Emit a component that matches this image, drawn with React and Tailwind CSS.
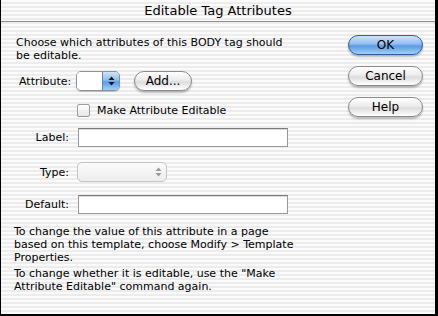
import React from 'react';

const stripes = "bg-[repeating-linear-gradient(to_bottom,#fbfbfb_0px,#fbfbfb_2px,#ececec_2px,#ececec_4px)]";

const AquaButton = ({ children, primary, className = '' }) => (
  <button
    className={
      'h-[20px] rounded-full border text-[12px] leading-none shadow-[0_2px_2px_rgba(0,0,0,0.25)] ' +
      (primary
        ? 'border-[#2d5f9e] text-black bg-[linear-gradient(to_bottom,#cfe4fb_0%,#8fbdf0_45%,#5a9ae4_55%,#9cd0fb_100%)] '
        : 'border-[#8a8a8a] text-black bg-[linear-gradient(to_bottom,#ffffff_0%,#ececec_45%,#dcdcdc_55%,#ffffff_100%)] ') +
      className
    }
  >
    {children}
  </button>
);

const Arrows = ({ color }) => (
  <svg width="7" height="10" viewBox="0 0 7 10">
    <path d="M3.5 0.5 L6.5 4 L0.5 4 Z" fill={color} />
    <path d="M3.5 9.5 L6.5 6 L0.5 6 Z" fill={color} />
  </svg>
);

const Field = ({ className = '' }) => (
  <div className={'h-[19px] w-[210px] border border-[#9a9a9a] border-t-[#7a7a7a] bg-white shadow-[inset_0_1px_1px_rgba(0,0,0,0.15)] ' + className} />
);

export default function App() {
  return (
    <div className={`w-[438px] h-[316px] border-l border-r-[3px] border-b-2 border-black ${stripes} flex flex-col font-['DejaVu_Sans',sans-serif] text-[11px] text-black`}>
      <div className="h-[22px] shrink-0 border-b border-[#8c8c8c] flex items-center justify-center text-[13px]">
        Editable Tag Attributes
      </div>
      <div className="flex flex-1">
        <div className="flex-1 pl-[15px] pt-[14px] leading-[13px]">
          <p>Choose which attributes of this BODY tag should<br />be editable.</p>

          <div className="mt-[9px] flex items-center h-[20px]">
            <span className="pl-[3px] w-[60px]">Attribute:</span>
            <div className="flex h-[20px] w-[44px] rounded-[5px] border border-[#8f8f8f] overflow-hidden shadow-[0_1px_1px_rgba(0,0,0,0.2)]">
              <div className="flex-1 bg-white" />
              <div className="w-[17px] flex items-center justify-center border-l border-[#5b86c0] bg-[linear-gradient(to_bottom,#cfe4fb_0%,#8fbdf0_45%,#5a9ae4_55%,#9cd0fb_100%)]">
                <Arrows color="#111" />
              </div>
            </div>
            <AquaButton className="ml-[14px] w-[58px]">Add...</AquaButton>
          </div>

          <div className="mt-[13px] flex items-center h-[13px] pl-[61px]">
            <div className="w-[13px] h-[13px] rounded-[2px] border border-[#9c9c9c] bg-[linear-gradient(to_bottom,#ffffff,#e6e6e6)]" />
            <span className="ml-[7px]">Make Attribute Editable</span>
          </div>

          <div className="mt-[11px] flex items-center">
            <span className="w-[53px] text-right">Label:</span>
            <Field className="ml-[9px]" />
          </div>

          <div className="mt-[15px] flex items-center">
            <span className="w-[53px] text-right">Type:</span>
            <div className="ml-[8px] flex h-[20px] w-[90px] rounded-[5px] border border-[#c4c4c4] overflow-hidden bg-[linear-gradient(to_bottom,#fbfbfb,#ededed)]">
              <div className="flex-1" />
              <div className="w-[16px] flex items-center justify-center">
                <Arrows color="#9a9a9a" />
              </div>
            </div>
          </div>

          <div className="mt-[13px] flex items-center">
            <span className="w-[53px] text-right">Default:</span>
            <Field className="ml-[9px]" />
          </div>

          <p className="mt-[11px] -ml-[2px]">
            To change the value of this attribute in a page<br />
            based on this template, choose Modify &gt; Template<br />
            Properties.
          </p>
          <p className="mt-[3px] -ml-[2px]">
            To change whether it is editable, use the "Make<br />
            Attribute Editable" command again.
          </p>
        </div>

        <div className="w-[75px] mr-[12px] pt-[13px] flex flex-col gap-[11px]">
          <AquaButton primary className="w-[75px]">OK</AquaButton>
          <AquaButton className="w-[75px]">Cancel</AquaButton>
          <AquaButton className="w-[75px]">Help</AquaButton>
        </div>
      </div>
    </div>
  );
}
